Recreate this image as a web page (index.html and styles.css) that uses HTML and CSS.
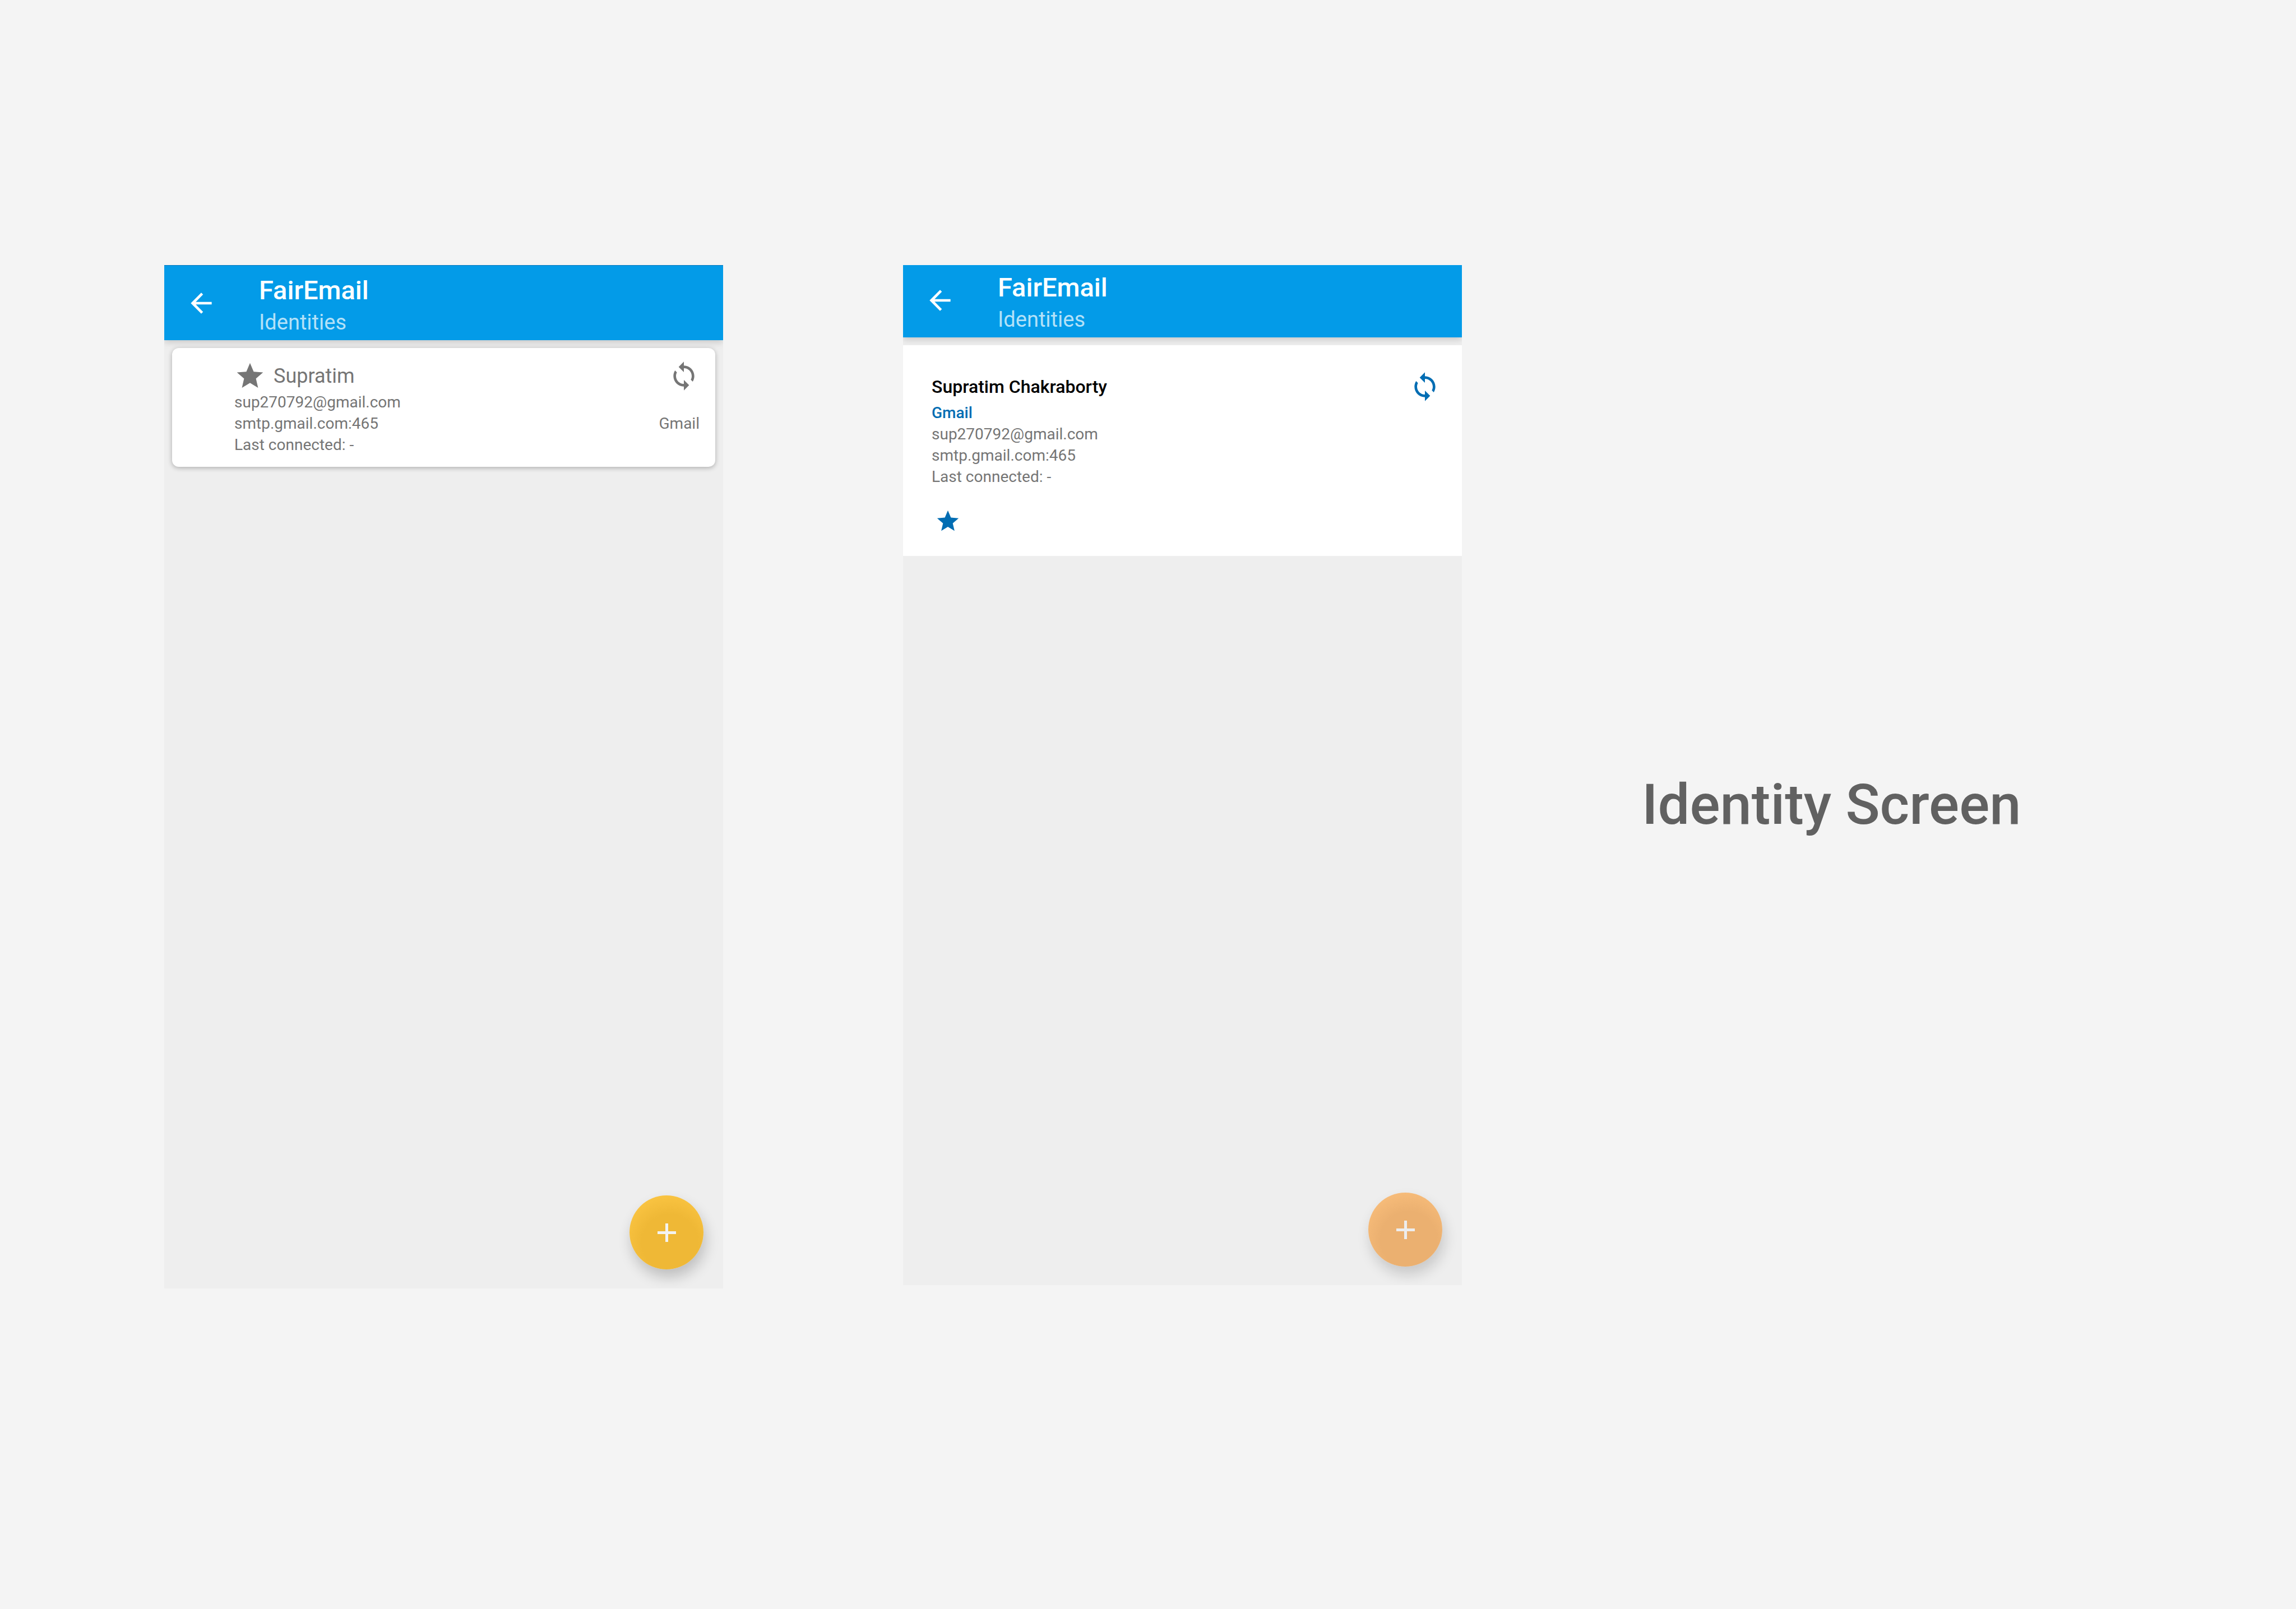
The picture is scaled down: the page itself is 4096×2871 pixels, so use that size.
FILE: index.html
```html
<!DOCTYPE html>
<html lang="en">
<head>
<meta charset="utf-8">
<meta name="viewport" content="width=device-width, initial-scale=1">
<title>Identity Screen</title>
<link rel="stylesheet" href="styles.css">
</head>
<body>
<svg class="sprite" aria-hidden="true">
  <symbol id="icon-back" viewBox="0 0 24 24"><path d="M20 11H7.83l5.59-5.59L12 4l-8 8 8 8 1.41-1.41L7.83 13H20v-2z"/></symbol>
  <symbol id="icon-star" viewBox="0 0 24 24"><path d="M12 17.27L18.18 21l-1.64-7.03L22 9.24l-7.19-.61L12 2 9.19 8.63 2 9.24l5.46 4.73L5.82 21z"/></symbol>
  <symbol id="icon-sync" viewBox="0 0 24 24"><path d="M12 4V1L8 5l4 4V6c3.31 0 6 2.69 6 6 0 1.01-.25 1.97-.7 2.8l1.46 1.46C19.54 15.03 20 13.57 20 12c0-4.42-3.58-8-8-8zm0 14c-3.31 0-6-2.69-6-6 0-1.01.25-1.97.7-2.8L5.24 7.74C4.46 8.97 4 10.43 4 12c0 4.42 3.58 8 8 8v3l4-4-4-4v3z"/></symbol>
  <symbol id="icon-plus" viewBox="0 0 33 33"><path d="M14 0h5v14h14v5H19v14h-5V19H0v-5h14z"/></symbol>
</svg>

<main class="board">
  <section class="phone phone-before">
    <header class="app-bar">
      <button class="back" type="button" aria-label="Back"><svg class="icon"><use href="#icon-back"/></svg></button>
      <div class="app-bar-text">
        <h2 class="app-name">FairEmail</h2>
        <p class="app-section">Identities</p>
      </div>
    </header>
    <article class="card card-raised">
      <div class="card-head">
        <svg class="icon" aria-hidden="true"><use href="#icon-star"/></svg>
        <h3 class="name">Supratim</h3>
      </div>
      <svg class="icon sync" aria-hidden="true"><use href="#icon-sync"/></svg>
      <p class="detail detail-wide">sup270792@gmail.com</p>
      <p class="detail">smtp.gmail.com:465</p>
      <p class="detail">Gmail</p>
      <p class="detail detail-wide">Last connected: -</p>
    </article>
    <button class="fab" type="button" aria-label="Add identity"><svg class="icon-plus"><use href="#icon-plus"/></svg></button>
  </section>

  <section class="phone phone-after">
    <header class="app-bar">
      <button class="back" type="button" aria-label="Back"><svg class="icon"><use href="#icon-back"/></svg></button>
      <div class="app-bar-text">
        <h2 class="app-name">FairEmail</h2>
        <p class="app-section">Identities</p>
      </div>
    </header>
    <article class="card card-flat">
      <div class="card-head">
        <h3 class="name">Supratim Chakraborty</h3>
      </div>
      <svg class="icon sync" aria-hidden="true"><use href="#icon-sync"/></svg>
      <p class="detail detail-wide provider">Gmail</p>
      <p class="detail detail-wide">sup270792@gmail.com</p>
      <p class="detail detail-wide">smtp.gmail.com:465</p>
      <p class="detail detail-wide">Last connected: -</p>
      <svg class="icon primary-star" aria-hidden="true"><use href="#icon-star"/></svg>
    </article>
    <button class="fab" type="button" aria-label="Add identity"><svg class="icon-plus"><use href="#icon-plus"/></svg></button>
  </section>

  <h1 class="board-title">Identity Screen</h1>
</main>
</body>
</html>
```
FILE: styles.css
```css
* {
  box-sizing: border-box;
}

body {
  margin: 0;
  background: #f4f4f4;
  font-family: Roboto, "Liberation Sans", sans-serif;
}

h1, h2, h3, p {
  margin: 0;
  font-weight: 400;
}

button {
  border: 0;
  padding: 0;
  background: none;
  color: inherit;
  cursor: pointer;
}

.sprite {
  display: none;
}

.icon {
  display: block;
  flex: none;
  width: 56px;
  height: 56px;
  fill: currentColor;
}

/* Board: two phones and the caption */
.board {
  display: grid;
  grid-template-columns: 997fr 997fr 1167fr;
  column-gap: 321px;
  min-height: 100vh;
  padding-left: 293px;
}

.board-title {
  align-self: center;
  color: #616161;
  font-size: 101px;
  font-weight: 500;
  line-height: 120px;
}

.phone {
  position: relative;
  align-self: start;
  margin-top: 473px;
  overflow: hidden;
  background: #eee;
}

.phone-before {
  min-height: 1826px;
  border-top: 1px solid #0277bd;
}

.phone-after {
  min-height: 1820px;
}

/* App bar */
.app-bar {
  display: flex;
  align-items: center;
  gap: 75px;
  height: 133px;
  padding: 0 38px;
  background: #039be8;
  color: #fff;
  box-shadow: 0 3px 12px rgba(0, 0, 0, 0.18);
}

.phone-after .app-bar {
  height: 129px;
  padding-bottom: 3px;
}

.app-name {
  font-size: 47px;
  font-weight: 500;
  line-height: 68px;
}

.app-section {
  color: #b3e1f8;
  font-size: 38px;
  line-height: 46px;
}

/* Identity cards */
.card {
  position: relative;
  display: grid;
  grid-template-columns: 1fr auto;
  background: #fff;
  color: #757575;
}

.card-head {
  display: flex;
  align-items: center;
  gap: 14px;
}

.card-raised {
  margin: 14px;
  padding: 22px 28px 20px 111px;
  border-radius: 12px;
  box-shadow: 0 2px 8px rgba(0, 0, 0, 0.28);
}

.card-flat {
  margin-top: 14px;
  padding: 46px 38px 39px 51px;
}

.name {
  font-size: 36px;
}

.card-flat .name {
  color: #000;
  font-size: 32px;
  font-weight: 500;
}

.sync {
  justify-self: end;
}

.detail {
  font-size: 28px;
  line-height: 38px;
}

.detail-wide {
  grid-column: 1 / -1;
}

.provider {
  font-weight: 500;
}

.card-flat .sync,
.provider,
.primary-star {
  color: #016db3;
}

.primary-star {
  width: 46px;
  height: 46px;
  margin: 37px 0 0 6px;
}

/* Floating add button */
.fab {
  position: absolute;
  right: 35px;
  bottom: 34px;
  display: flex;
  align-items: center;
  justify-content: center;
  width: 132px;
  height: 132px;
  border-radius: 50%;
  background: radial-gradient(circle at 72px 84px, #efb836 50px, #f9c341 84px);
  box-shadow: 4px 14px 24px rgba(0, 0, 0, 0.2);
  color: #f3f3f1;
}

.phone-after .fab {
  bottom: 33px;
  background: radial-gradient(circle at 72px 84px, #ebb070 50px, #f6bb79 84px);
  box-shadow: 4px 14px 24px rgba(0, 0, 0, 0.16);
  color: #ededed;
}

.icon-plus {
  display: block;
  width: 33px;
  height: 33px;
  fill: currentColor;
}
```
